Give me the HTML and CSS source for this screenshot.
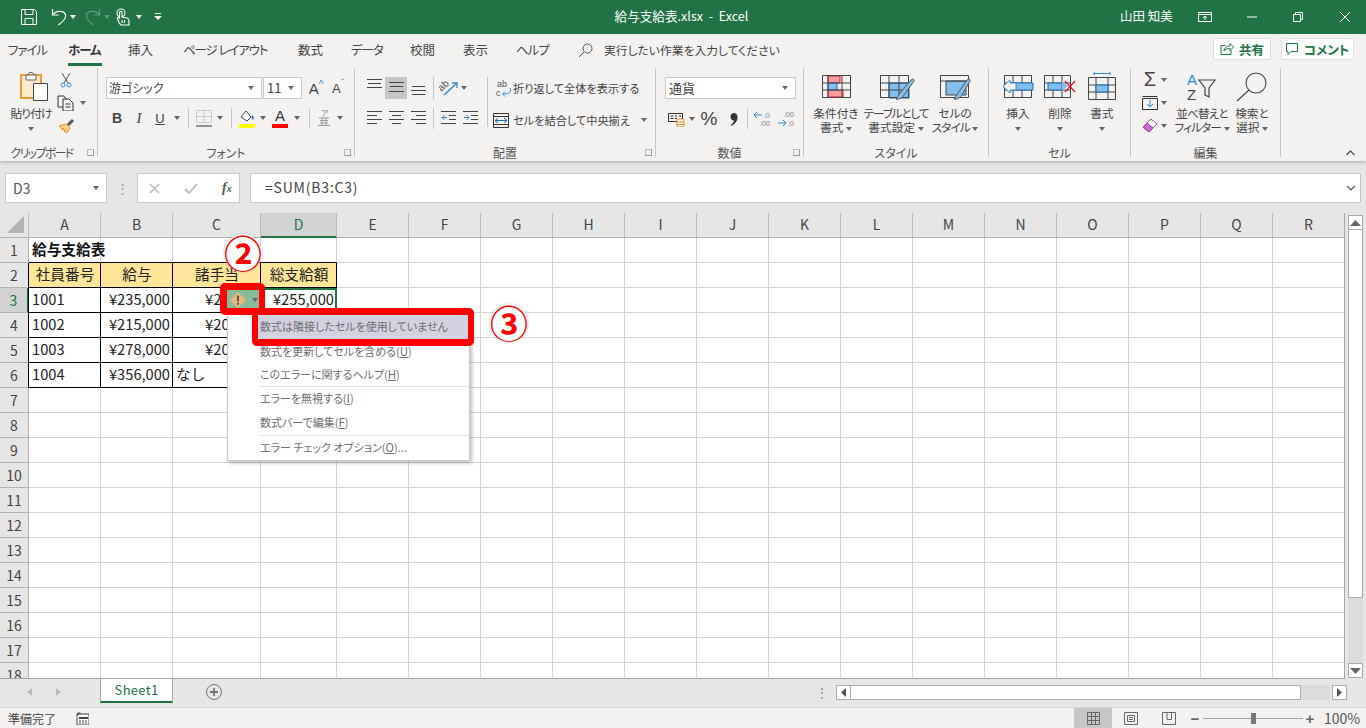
FILE: index.html
```html
<!DOCTYPE html>
<html lang="ja">
<head>
<meta charset="utf-8">
<title>給与支給表.xlsx - Excel</title>
<link rel="stylesheet" href="styles.css">
</head>
<body>
<header class="titlebar">
  <div class="qat">
    <svg class="q-save" width="18" height="18" viewBox="0 0 18 18" fill="none" stroke="#fff"><path d="M1.5 1.5h13l2 2v13h-15z"/><path d="M5 1.5v5h8v-5M5 16.5v-6h8v6"/></svg>
    <svg class="q-undo" width="16" height="18" viewBox="0 0 16 18" fill="none" stroke="#fff" stroke-width="1.2"><path d="M1.5 1v6h6"/><path d="M1.5 7C4 3 13 1.500 14.500 7 15.500 11 10 15 7.500 17"/></svg>
    <i class="caret white q-c1"></i>
    <svg class="q-redo" width="16" height="18" viewBox="0 0 16 18" fill="none" stroke="#5f9c7d" stroke-width="1.2"><path d="M14.500 1v6h-6"/><path d="M14.500 7C12 3 3 1.500 1.500 7 .5 11 6 15 8.500 17"/></svg>
    <i class="caret dim q-c2"></i>
    <svg class="q-touch" width="14" height="18" viewBox="0 0 14 18" fill="none" stroke="#fff" stroke-width="1.100"><circle cx="5" cy="5" r="4"/><path d="M3.500 15.500 1.500 11c-.5-1.500 1-2 2-1V4.500c0-1.500 2.500-1.500 2.500 0V9l5 1c1.500.5 2 1 2 2.500v4.500H5z" fill="#217346"/><path d="M6 12v3M8.500 12v3"/></svg>
    <i class="caret white q-c3"></i>
    <svg class="q-more" width="8" height="8" viewBox="0 0 8 8"><path d="M1 0h6v1H1zM0 3h8L4 7z" fill="#fff"/></svg>
  </div>
  <div class="doc-title">給与支給表.xlsx&nbsp; - &nbsp;Excel</div>
  <div class="user">山田 知美</div>
  <div class="winbtns">
    <svg width="14" height="12" viewBox="0 0 14 12" fill="none" stroke="#fff"><path d="M.5 1.500h13v9H.5zM.5 3.500h13M7 9V5M5 7l2-2 2 2"/></svg>
    <svg width="11" height="12" viewBox="0 0 11 12" stroke="#fff"><path d="M0 6h10"/></svg>
    <svg width="11" height="12" viewBox="0 0 11 12" fill="none" stroke="#fff"><path d="M.5 3.500h7v7h-7zM2.500 3.500v-2h7v7h-2"/></svg>
    <svg width="12" height="12" viewBox="0 0 12 12" stroke="#fff" fill="none"><path d="M1 1l10 10M11 1 1 11"/></svg>
  </div>
</header>

<nav class="tabs">
  <span class="tab t1 kana">ファイル</span>
  <span class="tab t2 active kana">ホーム</span>
  <span class="tab t3">挿入</span>
  <span class="tab t4 kana">ページ レイアウト</span>
  <span class="tab t5">数式</span>
  <span class="tab t6 kana">データ</span>
  <span class="tab t7">校閲</span>
  <span class="tab t8">表示</span>
  <span class="tab t9 kana">ヘルプ</span>
  <svg class="tell-icon" width="15" height="15" viewBox="0 0 15 15" fill="none" stroke="#555"><circle cx="9.500" cy="5.500" r="4.500"/><path d="M6 9 1 14"/></svg>
  <span class="tell">実行したい作業を入力してください</span>
  <span class="share-btn">
    <svg width="14" height="14" viewBox="0 0 14 14" fill="none" stroke="#217346"><path d="M5.500 3.500H1v9h10V8"/><path d="M4 9c0-3 3-5 6-5V1.500L13.500 5 10 8.500V6.500c-3 0-5 1-6 2.500z"/></svg>
    <b>共有</b>
  </span>
  <span class="comment-btn">
    <svg width="13" height="14" viewBox="0 0 13 14" fill="none" stroke="#217346"><path d="M.5 1.500h11v8H5l-3 3v-3H.5z"/></svg>
    <b>コメント</b>
  </span>
</nav>

<section class="ribbon">
  <div class="group g-clip">
    <div class="gbody flush">
      <div class="big w46">
        <span class="big-ic paste-ic">
          <svg width="28" height="29" viewBox="0 0 28 29"><path d="M1 3h20v23H1z" fill="#fdeacb" stroke="#ed9c3c" stroke-width="2"/><path d="M6 3h10v5H6z" fill="#fff" stroke="#666"/><path d="M8 3c0-3.500 6-3.500 6 0" fill="none" stroke="#666"/><path d="M13.500 11.500h14v17h-14z" fill="#fff" stroke="#444"/></svg>
        </span>
        <span class="ln tight1">貼り付け</span>
        <span class="ln"><i class="caret"></i></span>
      </div>
      <div class="stack3">
        <div class="row23"><span class="b w24"><svg width="12" height="16" viewBox="0 0 12 16" fill="none" stroke="#555"><path d="M2 1l6 10M10 1 4 11"/><circle cx="3" cy="13" r="2" stroke="#2b88d8"/><circle cx="9" cy="13" r="2" stroke="#2b88d8"/></svg></span></div>
        <div class="row23"><span class="b w24"><svg width="18" height="16" viewBox="0 0 18 16" fill="none" stroke="#333"><path d="M6 12H1V1h6l2 3"/><path d="M6 4h6l4 4v8H6z" fill="#f3f2f1"/><path d="M8.500 9h5M8.500 12h5"/></svg></span><span class="b w10"><i class="caret"></i></span></div>
        <div class="row23"><span class="b w24"><svg width="17" height="16" viewBox="0 0 17 16"><path d="M1 8l7-2 4 4-3 5z" fill="#fbd38c" stroke="#ed8b2b"/><path d="M3 12l3-2M6 14l2-3" stroke="#ed8b2b"/><path d="M10 7l5-5" stroke="#555" stroke-width="3"/></svg></span></div>
      </div>
    </div>
    <div class="glabel clip-label">クリップボード<i class="launcher"></i></div>
  </div>

  <div class="group g-font">
    <div class="gbody col">
      <div class="row22">
        <span class="select s-font"><span>游ゴシック</span><i class="caret"></i></span>
        <span class="select s-size"><span>11</span><i class="caret"></i></span>
        <span class="b w22 gapl"><span class="growA">A<sup>^</sup></span></span>
        <span class="b w22"><span class="growA sm">A<sup>ˇ</sup></span></span>
      </div>
      <div class="row20">
        <span class="b w22"><b class="fmt">B</b></span>
        <span class="b w22"><i class="fmt">I</i></span>
        <span class="b w20"><u class="fmt">U</u></span>
        <span class="b w14"><i class="caret"></i></span>
        <span class="b w9"><i class="vsep"></i></span>
        <span class="b w22"><svg width="16" height="17" viewBox="0 0 16 17" fill="none"><path d="M.5.500h15v12H.5zM8 .5v12M.5 6.500h15" stroke="#aaa" stroke-dasharray="1 1"/><path d="M0 16h16" stroke="#333" stroke-width="1"/></svg></span>
        <span class="b w10"><i class="caret"></i></span>
        <span class="b w12"><i class="vsep"></i></span>
        <span class="b w20"><svg width="17" height="19" viewBox="0 0 17 19"><path d="M2 8l5-6 5 6-4 4z" fill="#fff" stroke="#444"/><path d="M13 6c2 1 2 4 1 5-1-1-2-3-1-5z" fill="#2b6cb0"/><path d="M0 15h16v4H0z" fill="#ff0"/></svg></span>
        <span class="b w12"><i class="caret"></i></span>
        <span class="b w22 fcolor"><span>A</span><i class="redbar"></i></span>
        <span class="b w12"><i class="caret"></i></span>
        <span class="b w12"><i class="vsep"></i></span>
        <span class="b w18"><svg width="14" height="18" viewBox="0 0 14 18" fill="none"><text x="4" y="7" class="svgt g">ア</text><path d="M2 9h10M3 11.500h8M3 14h8M1 16.500h12M5 9v7.500M9 9v7.500" stroke="#999"/></svg></span>
        <span class="b w14"><i class="caret"></i></span>
      </div>
    </div>
    <div class="glabel">フォント<i class="launcher"></i></div>
  </div>

  <div class="group g-align">
    <div class="gbody">
      <div class="col">
        <div class="row22">
          <span class="b w22"><svg width="15" height="22" viewBox="0 0 15 22" stroke="#444"><path d="M0 2.500h15M1 6.500h13M0 10.500h15"/></svg></span>
          <span class="b w22 on"><svg width="15" height="22" viewBox="0 0 15 22" stroke="#444"><path d="M0 5.500h15M1 9.500h13M0 14.500h15"/></svg></span>
          <span class="b w22"><svg width="15" height="22" viewBox="0 0 15 22" stroke="#444"><path d="M1 9.500h13M0 13.500h15M1 17.500h13"/></svg></span>
          <span class="b w8"><i class="vsep tall"></i></span>
          <span class="b w22"><svg class="orient" width="19" height="17" viewBox="0 0 19 17" fill="none"><text x="2" y="11" class="svgt rot">ab</text><path d="M5 15 17 4M13 3h5v5" stroke="#2b88d8" stroke-width="1.300"/></svg></span>
          <span class="b w10"><i class="caret"></i></span>
        </div>
        <div class="row20">
          <span class="b w22"><svg width="15" height="14" viewBox="0 0 15 14" stroke="#444"><path d="M0 .5h15M0 4.500h10M0 8.500h15M0 12.500h10"/></svg></span>
          <span class="b w22"><svg width="15" height="14" viewBox="0 0 15 14" stroke="#444"><path d="M0 .5h15M3 4.500h9M0 8.500h15M3 12.500h9"/></svg></span>
          <span class="b w22"><svg width="15" height="14" viewBox="0 0 15 14" stroke="#444"><path d="M0 .5h15M5 4.500h10M0 8.500h15M5 12.500h10"/></svg></span>
          <span class="b w8"><i class="vsep tall"></i></span>
          <span class="b w22"><svg width="15" height="14" viewBox="0 0 15 14" fill="none"><path d="M0 .5h15M8 4.500h7M8 8.500h7M0 12.500h15" stroke="#444"/><path d="M6 6.500H1M3.500 4 1 6.500 3.500 9" stroke="#2b88d8"/></svg></span>
          <span class="b w22"><svg width="15" height="14" viewBox="0 0 15 14" fill="none"><path d="M0 .5h15M8 4.500h7M8 8.500h7M0 12.500h15" stroke="#444"/><path d="M1 6.500h5M3.500 4 6 6.500 3.500 9" stroke="#2b88d8"/></svg></span>
        </div>
      </div>
      <i class="vdiv"></i>
      <div class="col wrapcol">
        <div class="wrapline"><span class="ic20"><svg class="wrap-ic" width="16" height="17" viewBox="0 0 16 17" fill="none"><text x="1" y="7" class="svgt">ab</text><text x="0" y="16" class="svgt">c</text><path d="M14 8c2 5-2 6-7 6M9 11.500 6.500 14 9 16.500" stroke="#2b88d8"/></svg></span><span>折り返して全体を表示する</span></div>
        <div class="wrapline second"><span class="ic20"><svg width="17" height="15" viewBox="0 0 17 15" fill="none"><path d="M.5.5h15v14H.5z" stroke="#333"/><path d="M.5 3.500h15M.5 11.500h15" stroke="#333"/><path d="M2 7.500h12M5 5 2 7.500 5 10M11 5l3 2.500L11 10" stroke="#106ebe"/></svg></span><span>セルを結合して中央揃え</span><i class="caret ml10"></i></div>
      </div>
    </div>
    <div class="glabel">配置<i class="launcher"></i></div>
  </div>

  <div class="group g-num">
    <div class="gbody col">
      <div class="row22"><span class="select s-num"><span>通貨</span><i class="caret"></i></span></div>
      <div class="row20 num-row">
        <span class="b w22"><svg width="17" height="15" viewBox="0 0 17 15" fill="none"><path d="M.5 1.500h14v8H.5z" stroke="#333"/><path d="M2.500 4h3M7 4h2M11 4h2M2.500 6.500h3M7 6.500h2" stroke="#333"/><rect x="9" y="7" width="7" height="8" rx="2" fill="#fff" stroke="#ed8b2b"/><path d="M9 10h7M9 12.500h7" stroke="#ed8b2b"/></svg></span>
        <span class="b w10"><i class="caret"></i></span>
        <span class="b w24 pct">%</span>
        <span class="b w24"><svg width="9" height="13" viewBox="0 0 9 13"><path d="M4.500 0a4 4 0 0 1 4 4.500c0 3.500-2.500 6.500-6 8.500L2 12c2-1.500 3-3.500 3-4.500A3.800 3.800 0 0 1 4.500 0z" fill="#333"/></svg></span>
        <span class="b w4"><i class="vsep"></i></span>
        <span class="b w24"><svg width="17" height="16" viewBox="0 0 17 16" fill="none"><path d="M9 4H1M4 1 1 4l3 3" stroke="#2b88d8"/><text x="10" y="7" class="svgt g">.0</text><text x="6" y="15" class="svgt g">.00</text></svg></span>
        <span class="b w24"><svg width="17" height="16" viewBox="0 0 17 16" fill="none"><text x="6" y="6" class="svgt g">.00</text><path d="M1 12h8M6 9l3 3-3 3" stroke="#2b88d8"/><text x="10" y="15" class="svgt g">.0</text></svg></span>
      </div>
    </div>
    <div class="glabel">数値<i class="launcher"></i></div>
  </div>

  <div class="group g-style">
    <div class="gbody upper">
      <div class="big w52">
        <span class="big-ic"><svg width="29" height="23" viewBox="0 0 29 23" fill="none"><path d="M6 1h12v7H6zM6 15h15v7H6z" fill="#ff9aa2" stroke="#e81123"/><path d="M6 8h9v7H6z" fill="#83beec" stroke="#106ebe"/><path d="M.5.500h28v22H.5zM.5 8h28M.5 15h28M6 .5v22M20 .5v22" stroke="#444"/></svg></span>
        <span class="ln">条件付き</span><span class="ln">書式 <i class="caret"></i></span>
      </div>
      <div class="big w68">
        <span class="big-ic shift2"><svg width="36" height="27" viewBox="0 0 36 27" fill="none"><path d="M9 8h20v15H9z" fill="#83beec" stroke="#106ebe"/><path d="M.5.500h28v22H.5zM.5 8h28M.5 15h28M9 .5v22M19 .5v22" stroke="#444"/><path d="M20 18 31 5c2-2 4 0 3 1L24 20c-1 2-5 5-8 4 2-1 2-4 4-6z" fill="#83beec" stroke="#555"/></svg></span>
        <span class="ln tight2">テーブルとして</span><span class="ln">書式設定 <i class="caret"></i></span>
      </div>
      <div class="big w50">
        <span class="big-ic shift3"><svg width="32" height="27" viewBox="0 0 32 27" fill="none"><path d="M6 6h20v14H6z" fill="#83beec" stroke="#444"/><path d="M.5.500h28v22H.5z" stroke="#444"/><path d="M.5 6h28" stroke="#444"/><path d="M18 18 27 5c2-2 4 0 3 1L22 20c-1 2-5 5-8 4 2-1 2-4 4-6z" fill="#83beec" stroke="#555"/></svg></span>
        <span class="ln">セルの</span><span class="ln"><span class="tight1">スタイル</span> <i class="caret"></i></span>
      </div>
    </div>
    <div class="glabel">スタイル</div>
  </div>

  <div class="group g-cells">
    <div class="gbody upper">
      <div class="big w42">
        <span class="big-ic"><svg width="32" height="23" viewBox="0 0 32 23" fill="none"><path d="M2.500.5h27v22h-27zM2.500 8h27M2.500 15h27M11 .5v22M20 .5v22" stroke="#444"/><path d="M8 8h23v7H8z" fill="#83beec" stroke="#106ebe"/><path d="M8 5 1 11.500 8 18v-3h6V8H8z" fill="#fff" stroke="#2b88d8"/></svg></span>
        <span class="ln">挿入</span><span class="ln"><i class="caret"></i></span>
      </div>
      <div class="big w42">
        <span class="big-ic"><svg width="32" height="23" viewBox="0 0 32 23" fill="none"><path d="M.5.500h26v22H.5zM.5 8h26M.5 15h26M9 .5v22M18 .5v22" stroke="#444"/><path d="M4 8h14v7H4z" fill="#83beec" stroke="#106ebe"/><path d="M18 6v10l6-5z" fill="#83beec"/><path d="M21 6l10 11M31 6 21 17" stroke="#e81123" stroke-width="1.200"/></svg></span>
        <span class="ln">削除</span><span class="ln"><i class="caret"></i></span>
      </div>
      <div class="big w42">
        <span class="big-ic upshift"><svg width="28" height="28" viewBox="0 0 28 28" fill="none"><path d="M6 1.500h16M6 0v3M22 0v3" stroke="#2b88d8"/><path d="M.5 5.500h27v22H.5zM.5 13h27M.5 20h27M8 5.500v22M20 5.500v22" stroke="#444"/><path d="M8 13h12v7H8z" fill="#83beec" stroke="#106ebe"/></svg></span>
        <span class="ln">書式</span><span class="ln"><i class="caret"></i></span>
      </div>
    </div>
    <div class="glabel">セル</div>
  </div>

  <div class="group g-edit">
    <div class="gbody flush">
      <div class="stack3">
        <div class="row23"><span class="b w18 sigma">Σ</span><span class="b w10"><i class="caret"></i></span></div>
        <div class="row23"><span class="b w18"><svg width="16" height="14" viewBox="0 0 16 14" fill="none"><path d="M.5 2.500h15v11H.5zM.5.500h15" stroke="#333"/><path d="M8 4v7M5 8l3 3 3-3" stroke="#2b88d8"/></svg></span><span class="b w10"><i class="caret"></i></span></div>
        <div class="row23"><span class="b w18"><svg width="16" height="16" viewBox="0 0 16 16"><path d="M1 9 9 1l6 5-8 8z" fill="#fff" stroke="#a33dad"/><path d="M1 9l4-4 6 5-4 4z" fill="#c46dce" stroke="#a33dad"/></svg></span><span class="b w10"><i class="caret"></i></span></div>
      </div>
      <div class="big w66">
        <span class="big-ic"><svg width="30" height="29" viewBox="0 0 30 29" fill="none"><text x="0" y="13" class="svgt az">A</text><text x="0" y="28" class="svgt az d">Z</text><path d="M12 8h16l-6 8v9l-4-2v-7z" stroke="#444" stroke-width="1.200"/></svg></span>
        <span class="ln tight1">並べ替えと</span><span class="ln"><span class="tight1">フィルター</span> <i class="caret"></i></span>
      </div>
      <div class="big w34">
        <span class="big-ic"><svg width="32" height="30" viewBox="0 0 32 30" fill="none" stroke="#444" stroke-width="1.100"><circle cx="20" cy="11" r="10"/><path d="M13 18 1 29"/></svg></span>
        <span class="ln">検索と</span><span class="ln">選択 <i class="caret"></i></span>
      </div>
    </div>
    <div class="glabel">編集</div>
  </div>
  <svg class="collapse" width="9" height="6" viewBox="0 0 9 6" fill="none" stroke="#555" stroke-width="1.300"><path d="M.5 5 4.500 1l4 4"/></svg>
</section>

<section class="formula">
  <div class="namebox"><span>D3</span><i class="caret"></i></div>
  <div class="fdots">⋮</div>
  <div class="fbtns">
    <svg width="11" height="11" viewBox="0 0 11 11" stroke="#bbb" stroke-width="1.600"><path d="M1 1l9 9M10 1 1 10"/></svg>
    <svg width="14" height="11" viewBox="0 0 14 11" fill="none" stroke="#bbb" stroke-width="1.800"><path d="M1 6l4 4 8-9"/></svg>
    <span class="fx">f<small>x</small></span>
  </div>
  <div class="finput"><span>=SUM(B3:C3)</span><svg width="10" height="6" viewBox="0 0 10 6" fill="none" stroke="#555" stroke-width="1.200"><path d="M1 1l4 4 4-4"/></svg></div>
</section>

<main class="sheetrow">
  <div class="gridview">
    <table class="grid">
      <colgroup><col class="c0"><col class="ca"><col class="ca"><col class="cc"><col class="cd"><col class="ca"><col class="ca"><col class="ca"><col class="ca"><col class="ca"><col class="ca"><col class="ca"><col class="ca"><col class="ca"><col class="ca"><col class="ca"><col class="ca"><col class="ca"><col class="ca"></colgroup>
      <thead><tr><th class="corner"><svg width="18" height="17" viewBox="0 0 18 17"><path d="M0 17 17 0v17z" fill="#b4b4b4"/></svg></th><th>A</th><th>B</th><th>C</th><th class="hsel">D</th><th>E</th><th>F</th><th>G</th><th>H</th><th>I</th><th>J</th><th>K</th><th>L</th><th>M</th><th>N</th><th>O</th><th>P</th><th>Q</th><th>R</th></tr></thead>
      <tbody>
        <tr><th>1</th><td class="title bb">給与支給表</td><td class="bb"></td><td class="bb"></td><td class="bb"></td><td></td><td></td><td></td><td></td><td></td><td></td><td></td><td></td><td></td><td></td><td></td><td></td><td></td><td></td></tr>
        <tr><th>2</th><td class="hd">社員番号</td><td class="hd">給与</td><td class="hd">諸手当</td><td class="hd">総支給額</td><td></td><td></td><td></td><td></td><td></td><td></td><td></td><td></td><td></td><td></td><td></td><td></td><td></td><td></td></tr>
        <tr><th class="rsel">3</th><td class="bx">1001</td><td class="bx r">¥235,000</td><td class="bx r">¥20,000</td><td class="cur r">¥255,000</td><td></td><td></td><td></td><td></td><td></td><td></td><td></td><td></td><td></td><td></td><td></td><td></td><td></td><td></td></tr>
        <tr><th>4</th><td class="bx">1002</td><td class="bx r">¥215,000</td><td class="bx r">¥20,000</td><td class="bx r"></td><td></td><td></td><td></td><td></td><td></td><td></td><td></td><td></td><td></td><td></td><td></td><td></td><td></td><td></td></tr>
        <tr><th>5</th><td class="bx">1003</td><td class="bx r">¥278,000</td><td class="bx r">¥20,000</td><td class="bx r"></td><td></td><td></td><td></td><td></td><td></td><td></td><td></td><td></td><td></td><td></td><td></td><td></td><td></td><td></td></tr>
        <tr><th>6</th><td class="bx">1004</td><td class="bx r">¥356,000</td><td class="bx">なし</td><td class="bx r"></td><td></td><td></td><td></td><td></td><td></td><td></td><td></td><td></td><td></td><td></td><td></td><td></td><td></td><td></td></tr>
        <tr><th>7</th><td></td><td></td><td></td><td></td><td></td><td></td><td></td><td></td><td></td><td></td><td></td><td></td><td></td><td></td><td></td><td></td><td></td><td></td></tr>
        <tr><th>8</th><td></td><td></td><td></td><td></td><td></td><td></td><td></td><td></td><td></td><td></td><td></td><td></td><td></td><td></td><td></td><td></td><td></td><td></td></tr>
        <tr><th>9</th><td></td><td></td><td></td><td></td><td></td><td></td><td></td><td></td><td></td><td></td><td></td><td></td><td></td><td></td><td></td><td></td><td></td><td></td></tr>
        <tr><th>10</th><td></td><td></td><td></td><td></td><td></td><td></td><td></td><td></td><td></td><td></td><td></td><td></td><td></td><td></td><td></td><td></td><td></td><td></td></tr>
        <tr><th>11</th><td></td><td></td><td></td><td></td><td></td><td></td><td></td><td></td><td></td><td></td><td></td><td></td><td></td><td></td><td></td><td></td><td></td><td></td></tr>
        <tr><th>12</th><td></td><td></td><td></td><td></td><td></td><td></td><td></td><td></td><td></td><td></td><td></td><td></td><td></td><td></td><td></td><td></td><td></td><td></td></tr>
        <tr><th>13</th><td></td><td></td><td></td><td></td><td></td><td></td><td></td><td></td><td></td><td></td><td></td><td></td><td></td><td></td><td></td><td></td><td></td><td></td></tr>
        <tr><th>14</th><td></td><td></td><td></td><td></td><td></td><td></td><td></td><td></td><td></td><td></td><td></td><td></td><td></td><td></td><td></td><td></td><td></td><td></td></tr>
        <tr><th>15</th><td></td><td></td><td></td><td></td><td></td><td></td><td></td><td></td><td></td><td></td><td></td><td></td><td></td><td></td><td></td><td></td><td></td><td></td></tr>
        <tr><th>16</th><td></td><td></td><td></td><td></td><td></td><td></td><td></td><td></td><td></td><td></td><td></td><td></td><td></td><td></td><td></td><td></td><td></td><td></td></tr>
        <tr><th>17</th><td></td><td></td><td></td><td></td><td></td><td></td><td></td><td></td><td></td><td></td><td></td><td></td><td></td><td></td><td></td><td></td><td></td><td></td></tr>
        <tr><th class="cutrow">18</th><td></td><td></td><td></td><td></td><td></td><td></td><td></td><td></td><td></td><td></td><td></td><td></td><td></td><td></td><td></td><td></td><td></td><td></td></tr>
      </tbody>
    </table>
  </div>
  <aside class="vscroll">
    <span class="sbtn"><svg width="11" height="6" viewBox="0 0 11 6"><path d="M0 6 5.500 0 11 6z" fill="#666"/></svg></span>
    <span class="vthumb"></span>
    <span class="vtrack"></span>
    <span class="sbtn"><svg width="11" height="6" viewBox="0 0 11 6"><path d="M0 0h11L5.500 6z" fill="#666"/></svg></span>
  </aside>
</main>

<section class="sheetbar">
  <span class="nav-arrows">
    <svg width="5" height="8" viewBox="0 0 5 8"><path d="M5 0v8L0 4z" fill="#bbb"/></svg>
    <svg width="5" height="8" viewBox="0 0 5 8"><path d="M0 0v8l5-4z" fill="#bbb"/></svg>
  </span>
  <span class="sheet-tab">Sheet1</span>
  <svg class="addsheet" width="16" height="16" viewBox="0 0 16 16" fill="none" stroke="#777"><circle cx="8" cy="8" r="7.500"/><path d="M8 4v8M4 8h8" stroke-width="1.800"/></svg>
  <span class="hdots">⋮</span>
  <div class="hscroll">
    <span class="sbtn"><svg width="5" height="9" viewBox="0 0 5 9"><path d="M5 0v9L0 4.500z" fill="#555"/></svg></span>
    <span class="hthumb"></span>
    <span class="htrack"></span>
    <span class="sbtn"><svg width="5" height="9" viewBox="0 0 5 9"><path d="M0 0v9l5-4.500z" fill="#555"/></svg></span>
  </div>
</section>

<footer class="status">
  <span class="ready">準備完了</span>
  <svg class="macro" width="13" height="13" viewBox="0 0 13 13"><circle cx="3" cy="3" r="2.500" fill="#444"/><path d="M3 2h10v11H1V5" fill="#fff" stroke="#444"/><path d="M3 5h9v2H3z" fill="#444"/><path d="M3 9h2M6 9h2M9 9h2M3 11h2M6 11h2M9 11h2" stroke="#444"/></svg>
  <div class="st-right">
    <span class="view on"><svg width="13" height="13" viewBox="0 0 13 13" fill="none" stroke="#666"><path d="M.5.5h12v12H.5zM.5 4.500h12M.5 8.500h12M4.500.5v12M8.500.5v12"/></svg></span>
    <span class="view"><svg width="14" height="13" viewBox="0 0 14 13" fill="none" stroke="#666"><path d="M.5.5h13v12H.5zM3.500 3.500h7v6h-7zM5 5.500h4M5 7.500h4"/></svg></span>
    <span class="view"><svg width="14" height="13" viewBox="0 0 14 13" fill="none" stroke="#666"><path d="M.5.5h13v12H.5zM5 .5v7h4.500v-7"/></svg></span>
    <span class="zm">−</span>
    <span class="slider"><i></i></span>
    <span class="zm">+</span>
    <span class="pct100">100%</span>
  </div>
</footer>

<div class="menu">
  <div class="mi hl mh25">数式は隣接したセルを使用していません</div>
  <div class="mi mh23">数式を更新してセルを含める(<u>U</u>)</div>
  <div class="mi sepb">このエラーに関するヘルプ(<u>H</u>)</div>
  <div class="mi">エラーを無視する(<u>I</u>)</div>
  <div class="mi mh25 sepb">数式バーで編集(<u>F</u>)</div>
  <div class="mi">エラー チェック オプション(<u>O</u>)...</div>
</div>
<div class="smarttag">
  <svg width="16" height="16" viewBox="0 0 16 16"><path d="M8 0l8 8-8 8-8-8z" fill="#e8b77a"/><path d="M7 3.500h2v6H7zM7 10.800h2v2H7z" fill="#555"/></svg>
  <i class="caret"></i>
</div>
<div class="redbox rb1"></div>
<div class="redbox rb2"></div>
<div class="mark m2">②</div>
<div class="mark m3">③</div>
</body>
</html>
```

FILE: styles.css
```css
* { box-sizing: border-box; }
html, body { margin: 0; height: 100%; }
body {
  width: 1366px; height: 728px; overflow: hidden;
  background: #e6e6e6; color: #444;
  font-family: "Noto Sans CJK JP", "Liberation Sans", sans-serif;
  font-size: 12px;
  font-feature-settings: "palt";
  display: flex; flex-direction: column;
}
svg { display: block; flex: none; }
i { font-style: normal; }

.caret { display: inline-block; width: 0; height: 0; border: 3.5px solid transparent; border-top: 4px solid #666; border-bottom: 0; vertical-align: middle; }
.caret.white { border-top-color: #fff; }
.caret.dim { border-top-color: #5f9c7d; }

/* title bar */
.titlebar { height: 34px; flex: none; background: #217346; color: #fff; display: flex; align-items: center; position: relative; padding-bottom: 1px; }
.qat { display: flex; align-items: center; padding-left: 20px; width: 180px; flex: none; }
.q-undo { margin-left: 13px; }
.q-c1 { margin-left: 3px; }
.q-redo { margin-left: 9px; }
.q-c2 { margin-left: 3px; }
.q-touch { margin-left: 6px; }
.q-c3 { margin-left: 6px; }
.q-more { margin-left: 12px; }
.doc-title { width: 1003px; text-align: center; font-size: 12.6px; padding-bottom: 3px; }
.user { position: absolute; left: 1120px; font-size: 12.5px; padding-bottom: 3px; }
.winbtns { position: absolute; left: 1198px; display: flex; align-items: center; gap: 33px; }
.winbtns svg:nth-child(1) { margin-right: 2px; }
.winbtns svg:nth-child(3) { margin-left: 2px; }
.winbtns svg:nth-child(4) { margin-left: 2px; }

/* tabs */
.tabs { height: 32px; flex: none; background: #f3f2f1; display: flex; align-items: center; position: relative; font-size: 12.5px; color: #444; padding-bottom: 2px; }
.tab { position: relative; white-space: nowrap; }
.kana { letter-spacing: -1.100px; }
.t1 { margin-left: 8px; width: 60px; }
.t2 { width: 60px; font-weight: 700; color: #333; }
.t2::after { content: ""; position: absolute; left: 0; top: 23px; width: 34px; height: 3px; background: #217346; }
.t3 { width: 55px; }
.t4 { width: 115px; }
.t5 { width: 53px; }
.t6 { width: 59px; }
.t7 { width: 53px; }
.t8 { width: 53px; }
.t9 { width: 62px; }
.tell-icon { margin-right: 11px; margin-left: 0; margin-top: 2px; }
.tell { font-size: 11.8px; }
.share-btn, .comment-btn { position: absolute; top: 4px; height: 22px; background: #fff; border: 1px solid #e1dfdd; border-radius: 2px; display: flex; align-items: center; justify-content: center; gap: 5px; color: #217346; font-size: 12.5px; }
.share-btn { left: 1213px; width: 58px; }
.comment-btn { left: 1281px; width: 73px; }

/* ribbon */
.ribbon { height: 95px; flex: none; background: #f3f2f1; display: flex; padding-top: 2px; position: relative; box-shadow: 0 2px 3px rgba(0,0,0,.18); z-index: 1; }
.group { height: 89px; border-right: 1px solid #c8c6c4; flex: none; display: flex; flex-direction: column; position: relative; }
.g-clip { width: 98px; }
.g-font { width: 257px; }
.g-align { width: 301px; }
.g-num { width: 148px; }
.g-style { width: 185px; }
.g-cells { width: 142px; }
.g-edit { width: 150px; }
.gbody { height: 77px; flex: none; display: flex; }
.gbody.col { flex-direction: column; padding-top: 9px; }
.g-font .gbody { padding-left: 8px; }
.g-align .gbody { padding: 9px 0 0 8px; }
.g-num .gbody { padding-left: 9px; }
.g-clip .gbody { padding-left: 8px; }
.g-style .gbody { padding: 5px 0 0 6px; }
.g-cells .gbody { padding: 5px 0 0 8px; }
.g-edit .gbody { padding-left: 10px; }
.col { display: flex; flex-direction: column; }
.glabel { height: 16px; flex: none; text-align: center; line-height: 16px; font-size: 12px; position: relative; color: #555; }
.clip-label { letter-spacing: -1.700px; padding-right: 14px; white-space: nowrap; }
.launcher { position: absolute; right: 3px; top: 4px; width: 7px; height: 7px; border: 1px solid #999; border-left-color: #bbb; border-top-color: #bbb; }

.big { display: flex; flex-direction: column; align-items: center; flex: none; white-space: nowrap; }
.big-ic { height: 33px; padding-top: 2px; display: flex; align-items: flex-start; justify-content: center; flex: none; }
.flush .big-ic { height: 38px; padding-top: 4px; }
.paste-ic { padding-left: 6px; }
.shift2 { padding-left: 4px; }
.shift3 { padding-left: 1px; }
.upshift svg { margin-top: -3px; }
.ln { height: 14px; line-height: 14px; flex: none; font-size: 11.7px; }
.tight1 { letter-spacing: -.9px; }
.tight2 { letter-spacing: -1.200px; }
.w46 { width: 46px; } .w52 { width: 52px; } .w68 { width: 68px; } .w50 { width: 50px; }
.w42 { width: 42px; } .w66 { width: 66px; } .w34 { width: 34px; }

.stack3 { display: flex; flex-direction: column; flex: none; }
.row23 { height: 23px; display: flex; align-items: center; }
.row22 { height: 22px; display: flex; align-items: center; flex: none; }
.row20 { height: 20px; margin-top: 9px; display: flex; align-items: center; flex: none; }
.b { display: flex; align-items: center; justify-content: center; height: 100%; flex: none; }
.w4 { width: 4px; } .w8 { width: 8px; } .w9 { width: 9px; } .w10 { width: 10px; } .w12 { width: 12px; } .w14 { width: 14px; }
.w18 { width: 18px; } .w20 { width: 20px; } .w22 { width: 22px; } .w24 { width: 24px; }
.gapl { margin-left: 3px; }
.on { background: #c6c6c6; }
.vsep { display: block; width: 1px; height: 20px; background: #c8c6c4; }
.vsep.tall { height: 22px; }
.vdiv { display: block; width: 1px; height: 50px; background: #c8c6c4; margin: 0 5px 0 6px; flex: none; }
.fmt { font-size: 13px; color: #444; font-family: "Liberation Sans", sans-serif; }
b.fmt { font-size: 14px; }
i.fmt { font-style: italic; font-family: "Liberation Serif", serif; font-size: 15px; }
.growA { font-size: 15px; font-family: "Liberation Sans", sans-serif; position: relative; }
.growA.sm { font-size: 13px; }
.growA sup { color: #2b88d8; font-size: 10px; line-height: 0; vertical-align: 6px; }
.select { height: 22px; background: #fff; border: 1px solid #c8c8c8; display: flex; align-items: center; justify-content: space-between; padding: 0 7px 2px 2px; font-size: 12px; flex: none; }
.s-font { width: 156px; margin-right: 1px; }
.s-size { width: 39px; padding-left: 3px; font-size: 13px; }
.s-num { width: 131px; padding-left: 3px; font-size: 13px; }
.select .caret { margin-top: 2px; }
.fcolor { flex-direction: column; color: #333; font-size: 15px; font-family: "Liberation Sans", sans-serif; line-height: 14px; }
.redbar { display: block; width: 16px; height: 4px; background: #f00; margin-top: 1px; }
.svgt { font: 9px "Liberation Sans", sans-serif; fill: #555; stroke: none; }
.svgt.g { fill: #888; font-size: 8px; }
.svgt.az { font-size: 15px; fill: #2b88d8; }
.svgt.az.d { fill: #444; }
.orient { overflow: visible; }
.svgt.rot { font-size: 10px; transform: rotate(-42deg); transform-origin: 3px 11px; transform-box: view-box; }
.wrapcol { height: 62px; font-size: 11.2px; }
.wrapline { height: 22px; display: flex; align-items: center; white-space: nowrap; }
.wrapline.second { margin-top: 10px; }
.ic20 { width: 20px; flex: none; display: block; }
.wrap-ic { margin-left: 3px; }
.ml10 { margin-left: 11px; }
.num-row { margin-top: 10px; }
.pct { font-size: 19px; font-family: "Liberation Sans", sans-serif; color: #444; }
.sigma { font-size: 20px; font-family: "Liberation Sans", sans-serif; color: #444; font-weight: 400; }
.collapse { position: absolute; right: 11px; top: 84px; }

/* formula bar */
.formula { height: 52px; flex: none; display: flex; padding: 12px 6px 0 5px; align-items: flex-start; }
.namebox, .fbtns, .finput { height: 30px; background: #fff; border: 1px solid #c8c8c8; display: flex; align-items: center; flex: none; }
.namebox { width: 102px; padding: 0 7px; justify-content: space-between; font-size: 14px; color: #555; }
.fdots { width: 30px; text-align: center; color: #999; line-height: 30px; font-size: 13px; flex: none; }
.fbtns { width: 103px; padding-left: 11px; }
.fbtns svg:nth-child(2) { margin-left: 24px; }
.fx { margin-left: 24px; font: italic 700 14px "Liberation Serif", serif; color: #555; }
.fx small { font-size: 10px; }
.finput { width: 1111px; margin-left: 10px; padding: 0 3px 3px 14px; justify-content: space-between; font-size: 14px; letter-spacing: .8px; color: #444; }
.finput svg { margin: 3px 1px 0 0; }

/* sheet */
.sheetrow { height: 466px; flex: none; display: flex; }
.gridview { width: 1345px; height: 466px; overflow: hidden; border-right: 1px solid #a6a6a6; border-bottom: 1px solid #a6a6a6; background: #fff; flex: none; }
.grid { border-collapse: separate; border-spacing: 0; table-layout: fixed; width: 1345px; font-feature-settings: normal; }
.c0 { width: 29px; } .ca { width: 72px; } .cc { width: 88px; } .cd { width: 76px; }
.grid tr { height: 25px; }
.grid th { background: #e6e6e6; font-weight: 400; color: #444; font-size: 14px; padding: 0 0 1px; border-right: 1px solid #b1b1b1; border-bottom: 1px solid #b1b1b1; height: 25px; line-height: 1; }
.grid thead th { border-right-color: #bdbdbd; padding-bottom: 2px; }
.grid th.corner { padding: 0; }
.corner svg { margin: 0 0 1px 7px; }
.grid th.cutrow { vertical-align: top; padding-top: 5px; }
.grid th.hsel { background: #d2d2d2; color: #217346; border-bottom: 2px solid #217346; }
.grid th.rsel { background: #d2d2d2; color: #217346; border-right: 2px solid #217346; }
.grid td { padding: 0 2px 1px 3px; border-right: 1px solid #d4d4d4; border-bottom: 1px solid #d4d4d4; height: 25px; font-size: 14.67px; line-height: 1; color: #222; white-space: nowrap; overflow: hidden; }
.grid td.r { text-align: right; }
.grid td.title { font-weight: 700; overflow: visible; color: #111; }
.grid td.bb { border-bottom-color: #000; }
.grid td.hd { background: #ffe699; text-align: center; border-right-color: #000; border-bottom-color: #000; }
.grid td.hd:nth-child(2) { box-shadow: -1px 0 0 #000; }
.grid td.bx { border-right-color: #000; border-bottom-color: #000; }
.grid tr td.bx:nth-child(2) { box-shadow: -1px 0 0 #000; }
.grid td.cur { outline: 2px solid #217346; outline-offset: -2px; overflow: visible; }

/* scroll bars */
.vscroll { width: 21px; padding: 2px 3px 1px 3px; display: flex; flex-direction: column; background: #e6e6e6; flex: none; }
.sbtn { width: 15px; height: 15px; background: #fff; border: 1px solid #ababab; display: flex; align-items: center; justify-content: center; flex: none; }
.vthumb { height: 368px; background: #fff; border: 1px solid #ababab; border-top: 0; flex: none; }
.vtrack { flex: 1; background: #dcdcdc; }

.sheetbar { height: 28px; flex: none; display: flex; align-items: flex-start; position: relative; background: #e6e6e6; }
.nav-arrows { width: 100px; height: 26px; display: flex; align-items: center; gap: 24px; padding-left: 27px; }
.sheet-tab { width: 73px; height: 24px; background: #fff; border: 1px solid #a6a6a6; border-top: 0; border-bottom: 2px solid #217346; color: #217346; text-align: center; line-height: 21px; font-size: 13px; letter-spacing: .3px; font-feature-settings: normal; }
.addsheet { margin: 5px 0 0 33px; }
.hdots { position: absolute; left: 816px; top: 4px; color: #888; font-size: 12px; }
.hscroll { position: absolute; left: 836px; top: 6px; width: 511px; height: 15px; display: flex; }
.hthumb { width: 450px; background: #fff; border: 1px solid #ababab; border-left: 0; flex: none; }
.htrack { width: 29px; background: #dcdcdc; flex: none; margin-right: 2px; }

.status { height: 21px; flex: none; background: #f3f2f1; border-top: 1px solid #d2d2d2; display: flex; align-items: center; position: relative; font-size: 12px; font-feature-settings: normal; }
.ready { margin-left: 8px; font-size: 12px; }
.macro { margin-left: 20px; }
.st-right { position: absolute; left: 1074px; top: 0; height: 20px; display: flex; align-items: center; }
.view { width: 38px; height: 21px; display: flex; align-items: center; justify-content: center; flex: none; }
.view.on { background: #c6c6c6; }
.zm { width: 14px; text-align: center; font: 700 15px "Liberation Sans", sans-serif; color: #666; flex: none; }
.slider { width: 100px; height: 1px; background: #a0a0a0; margin-left: 1px; position: relative; display: block; flex: none; }
.slider i { position: absolute; left: 48px; top: -5px; width: 5px; height: 11px; background: #777; }
.pct100 { margin-left: 7px; font-size: 14px; color: #555; white-space: nowrap; }

/* floating popup */
.menu { position: absolute; left: 227px; top: 312px; width: 243px; height: 149px; background: #fff; border: 1px solid #c8c8c8; padding-top: 1px; box-shadow: 2px 2px 4px rgba(0,0,0,.25); z-index: 3; color: #6f6f6f; font-size: 11px; }
.mi { height: 24px; line-height: 25px; padding-left: 32px; white-space: nowrap; position: relative; }
.mh25 { height: 25px; }
.mh23 { height: 23px; }
.mi.hl { background: linear-gradient(to right, #fff 24px, #d2d2e1 24px); }
.mi.sepb::after { content: ""; position: absolute; left: 32px; right: 0; bottom: -1px; height: 1px; background: #e1e1e1; }
.mi u { font-size: 11.500px; }
.smarttag { position: absolute; left: 227px; top: 290px; width: 33px; height: 20px; background: #88bb9a; display: flex; align-items: center; padding-left: 3px; gap: 6px; z-index: 3; }
.redbox { position: absolute; border: 7px solid #f00; border-radius: 5px; z-index: 4; }
.rb1 { left: 220px; top: 283px; width: 45px; height: 32px; border-width: 7px 6px 7px 7px; }
.rb2 { left: 252px; top: 308px; width: 222px; height: 38px; border-width: 7px 6px; }
.mark { position: absolute; width: 38px; height: 38px; border-radius: 50%; background: #fff; color: #f00; font-size: 38px; font-weight: 700; line-height: 36px; text-align: center; z-index: 5; font-feature-settings: normal; box-shadow: 0 0 3px rgba(0,0,0,.2); overflow: hidden; }
.m2 { left: 224px; top: 234px; }
.m3 { left: 490px; top: 304px; }
```
